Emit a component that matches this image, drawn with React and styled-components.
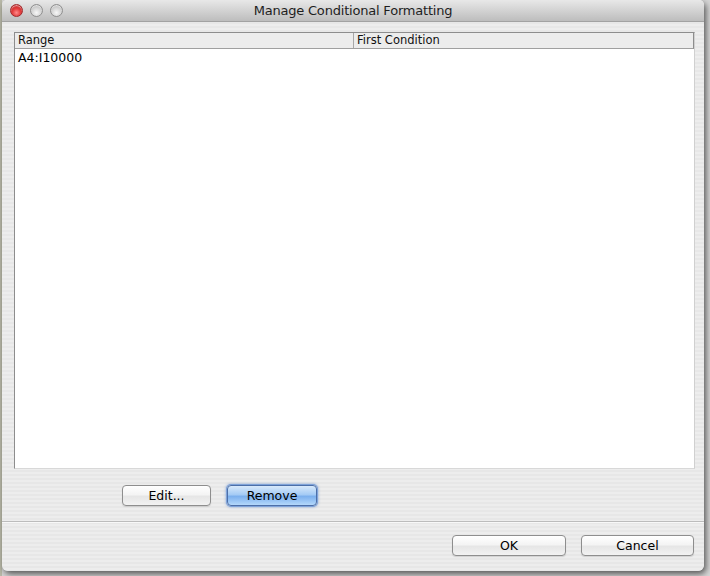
import React from "react";
import styled, { createGlobalStyle } from "styled-components";

const GlobalStyle = createGlobalStyle`
  html, body {
    margin: 0;
    padding: 0;
    width: 710px;
    height: 576px;
    overflow: hidden;
    background: #8c8c8c;
  }
  body {
    font-family: "Lucida Grande", "DejaVu Sans", sans-serif;
  }
`;

const Desk = styled.div`
  width: 710px;
  height: 576px;
  padding-left: 2px;
  box-sizing: border-box;
  background: linear-gradient(to right, #b9b9a8 0, #b9b9a8 2px, #d6d6d6 2px);
`;

const Window = styled.div`
  width: 702px;
  height: 571px;
  display: flex;
  flex-direction: column;
  border-radius: 5px 5px 6px 6px;
  overflow: hidden;
  box-shadow: 2px 3px 6px rgba(0, 0, 0, 0.6);
  background: repeating-linear-gradient(
    to bottom,
    #ededed 0,
    #ededed 2px,
    #e7e7e7 2px,
    #e7e7e7 4px
  );
`;

const TitleBar = styled.div`
  height: 22px;
  flex: none;
  position: relative;
  display: flex;
  align-items: center;
  justify-content: center;
  background: linear-gradient(to bottom, #e8e8e8, #bdbdbd);
  border-bottom: 1px solid #a2a2a2;
  box-sizing: border-box;
`;

const Lights = styled.div`
  position: absolute;
  left: 8px;
  top: 4px;
  display: flex;
  gap: 7px;
`;

const Light = styled.span`
  width: 13px;
  height: 13px;
  border-radius: 50%;
  box-sizing: border-box;
  border: 1px solid ${(p) => (p.$red ? "#a0282a" : "#8f8f8f")};
  background: ${(p) =>
    p.$red
      ? "radial-gradient(circle at 50% 70%, #ff8a8a 0, #e23b3b 45%, #b31e20 100%)"
      : "radial-gradient(circle at 50% 70%, #f8f8f8 0, #d4d4d4 50%, #a9a9a9 100%)"};
  box-shadow: inset 0 1px 1px rgba(255, 255, 255, 0.6);
`;

const Title = styled.div`
  font-size: 13px;
  color: #1e1e1e;
  letter-spacing: -0.2px;
`;

const Body = styled.div`
  flex: 1;
  display: flex;
  flex-direction: column;
  padding: 10px 9px 0 12px;
`;

const TablePanel = styled.div`
  height: 437px;
  flex: none;
  border: 1px solid #8d8d8d;
  border-right-color: #d0d0d0;
  border-bottom-color: #d8d8d8;
  background: #fff;
  box-sizing: border-box;
  display: flex;
  flex-direction: column;
`;

const HeaderRow = styled.div`
  display: grid;
  grid-template-columns: 338px 1fr;
  height: 16px;
  background: #ececec;
  border-bottom: 1px solid #9f9f9f;
  border-right: 1px solid #8d8d8d;
  box-sizing: border-box;
`;

const HeaderCell = styled.div`
  font-size: 11.5px;
  line-height: 15px;
  color: #111;
  padding-left: 3px;
  border-left: ${(p) => (p.$divider ? "1px solid #a8a8a8" : "none")};
`;

const Row = styled.div`
  display: grid;
  grid-template-columns: 338px 1fr;
  height: 17px;
`;

const Cell = styled.div`
  font-size: 12.5px;
  line-height: 17px;
  color: #000;
  padding-left: 3px;
`;

const ActionRow = styled.div`
  display: flex;
  gap: 16px;
  padding-left: 108px;
  height: 52px;
  align-items: center;
`;

const Separator = styled.div`
  height: 1px;
  background: #bcbcbc;
  border-bottom: 1px solid #f8f8f8;
  margin: 0 -9px 0 -12px;
`;

const Footer = styled.div`
  display: flex;
  justify-content: flex-end;
  gap: 15px;
  padding: 12px 1px 0 0;
`;

const Button = styled.button`
  width: ${(p) => p.$w}px;
  height: 21px;
  padding: 0;
  border-radius: 4px;
  font-family: "Lucida Grande", "DejaVu Sans", sans-serif;
  font-size: 12.5px;
  color: #000;
  cursor: default;
  box-sizing: border-box;
  border: 1px solid ${(p) => (p.$primary ? "#4d6fa8" : "#8e8e8e")};
  background: ${(p) =>
    p.$primary
      ? "linear-gradient(to bottom, #d8e9fb 0%, #a5cbf5 45%, #7cb0ee 55%, #b4d8fb 100%)"
      : "linear-gradient(to bottom, #ffffff 0%, #f4f4f4 45%, #e6e6e6 55%, #f2f2f2 100%)"};
  box-shadow: ${(p) =>
    p.$primary
      ? "0 0 0 1px #7fa3d9, 0 0 3px 1px rgba(70, 120, 200, 0.6)"
      : "0 1px 1px rgba(0, 0, 0, 0.12)"};
`;

export default function App() {
  return (
    <>
      <GlobalStyle />
      <Desk>
        <Window>
          <TitleBar>
            <Lights>
              <Light $red />
              <Light />
              <Light />
            </Lights>
            <Title>Manage Conditional Formatting</Title>
          </TitleBar>
          <Body>
            <TablePanel>
              <HeaderRow>
                <HeaderCell>Range</HeaderCell>
                <HeaderCell $divider>First Condition</HeaderCell>
              </HeaderRow>
              <Row>
                <Cell>A4:I10000</Cell>
                <Cell />
              </Row>
            </TablePanel>
            <ActionRow>
              <Button $w={89}>Edit...</Button>
              <Button $w={90} $primary>
                Remove
              </Button>
            </ActionRow>
            <Separator />
            <Footer>
              <Button $w={114}>OK</Button>
              <Button $w={113}>Cancel</Button>
            </Footer>
          </Body>
        </Window>
      </Desk>
    </>
  );
}
